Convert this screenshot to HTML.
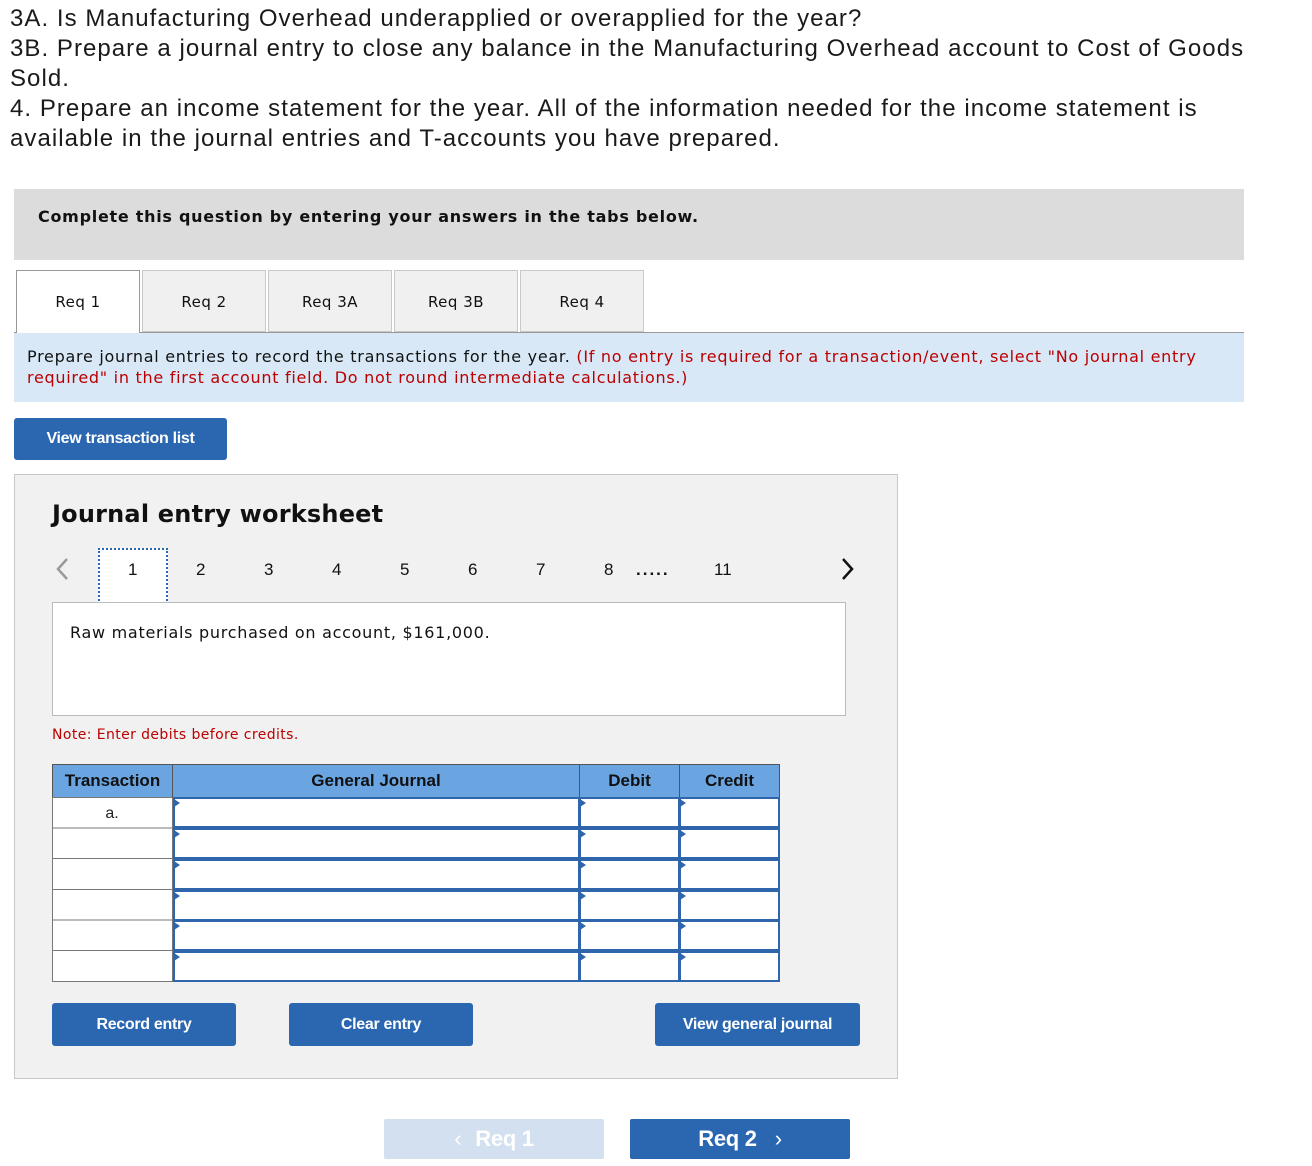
<!DOCTYPE html>
<html><head><meta charset="utf-8"><style>
*{box-sizing:border-box;margin:0;padding:0}
body{width:1312px;height:1166px;background:#fff;position:relative;overflow:hidden;font-family:"Liberation Sans",Arial,sans-serif;color:#111}
.abs{position:absolute}
.top{left:10px;top:4px;font-size:24px;line-height:30px;width:1290px;color:#1a1a1a;letter-spacing:1.05px;white-space:nowrap}
.v{font-family:"DejaVu Sans",Verdana,sans-serif;letter-spacing:0.045em}
.tab{position:absolute;top:270px;height:62px;width:124px;border:1px solid #c8c8c8;background:#f0f0f0;font-family:"DejaVu Sans",Verdana,sans-serif;font-size:15px;letter-spacing:0.5px;text-align:center;line-height:62px}
.btn{position:absolute;background:#2a67b0;color:#fff;font-weight:bold;text-align:center;border-radius:3px;font-size:16px;letter-spacing:-0.3px}
.n{position:absolute;top:560px;font-size:17px}
table{border-collapse:collapse}
</style></head><body>
<div class="abs top">3A. Is Manufacturing Overhead underapplied or overapplied for the year?<br>3B. Prepare a journal entry to close any balance in the Manufacturing Overhead account to Cost of Goods<br>Sold.<br>4. Prepare an income statement for the year. All of the information needed for the income statement is<br>available in the journal entries and T-accounts you have prepared.</div>

<div class="abs" style="left:14px;top:189px;width:1230px;height:71px;background:#dcdcdc"></div>
<div class="abs v" style="left:38px;top:207px;font-size:16px;font-weight:bold">Complete this question by entering your answers in the tabs below.</div>

<div class="abs" style="left:14px;top:332px;width:1230px;height:1px;background:#999"></div>
<div class="tab" style="left:16px;background:#fff;border-color:#999;border-bottom:none;height:63px">Req 1</div>
<div class="tab" style="left:142px">Req 2</div>
<div class="tab" style="left:268px">Req 3A</div>
<div class="tab" style="left:394px">Req 3B</div>
<div class="tab" style="left:520px">Req 4</div>

<div class="abs" style="left:14px;top:333px;width:1230px;height:69px;background:#d8e8f7"></div>
<div class="abs v" style="left:27px;top:346px;width:1215px;font-size:16px;line-height:21px;color:#111;white-space:nowrap">Prepare journal entries to record the transactions for the year. <span style="color:#b00">(If no entry is required for a transaction/event, select "No journal entry<br>required" in the first account field. Do not round intermediate calculations.)</span></div>

<div class="btn" style="left:14px;top:418px;width:213px;height:42px;line-height:42px;font-size:16px">View transaction list</div>

<div class="abs" style="left:14px;top:474px;width:884px;height:605px;background:#f1f1f1;border:1px solid #c8c8c8"></div>
<div class="abs v" style="left:52px;top:500px;font-size:24px;font-weight:bold;letter-spacing:0.2px">Journal entry worksheet</div>

<svg class="abs" style="left:54px;top:557px" width="16" height="24"><path d="M13 2 L4 12 L13 22" stroke="#999" stroke-width="2.5" fill="none"/></svg>
<svg class="abs" style="left:840px;top:557px" width="16" height="24"><path d="M3 2 L12 12 L3 22" stroke="#111" stroke-width="2.5" fill="none"/></svg>
<div class="abs" style="left:98px;top:548px;width:70px;height:57px;background:#fff;border:2px dotted #2a67b0"></div>
<div class="n" style="left:128px">1</div>
<div class="n" style="left:196px">2</div>
<div class="n" style="left:264px">3</div>
<div class="n" style="left:332px">4</div>
<div class="n" style="left:400px">5</div>
<div class="n" style="left:468px">6</div>
<div class="n" style="left:536px">7</div>
<div class="n" style="left:604px">8</div>
<div class="n" style="left:636px;font-weight:bold;letter-spacing:2px">.....</div>
<div class="n" style="left:714px">11</div>

<div class="abs" style="left:52px;top:602px;width:794px;height:114px;background:#fff;border:1px solid #bbb"></div>
<div class="abs v" style="left:70px;top:623px;font-size:16px">Raw materials purchased on account, $161,000.</div>
<div class="abs v" style="left:52px;top:727px;font-size:14px;color:#b00;letter-spacing:0.4px">Note: Enter debits before credits.</div>

<div class="abs" style="left:52px;top:764px">
<table style="width:728px">
<tr style="height:34px;background:#6aa5e2;font-weight:bold;font-size:17px">
<td style="width:120px;border:1px solid #555;border-bottom:2px solid #222;text-align:center">Transaction</td>
<td style="width:407px;border:1px solid #555;border-bottom:2px solid #222;text-align:center">General Journal</td>
<td style="width:100px;border:1px solid #555;border-bottom:2px solid #222;text-align:center">Debit</td>
<td style="width:100px;border:1px solid #555;border-bottom:2px solid #222;text-align:center">Credit</td>
</tr>
</table>
</div>
<svg class="abs" style="left:52px;top:797px" width="730" height="186">
<g>
<rect x="0.5" y="0.5" width="120" height="184" fill="#fff" stroke="#777"/>
<line x1="0" y1="31" x2="121" y2="31" stroke="#777"/>
<line x1="0" y1="61.5" x2="121" y2="61.5" stroke="#777"/>
<line x1="0" y1="92.5" x2="121" y2="92.5" stroke="#777"/>
<line x1="0" y1="123" x2="121" y2="123" stroke="#777"/>
<line x1="0" y1="153.5" x2="121" y2="153.5" stroke="#777"/>
<text x="60" y="21" font-family="Liberation Sans" font-size="16" text-anchor="middle" fill="#222">a.</text>
</g>
<g fill="#fff" stroke="#2f65aa" stroke-width="2">
<rect x="122" y="1" width="405" height="29"/><rect x="528" y="1" width="99" height="29"/><rect x="628" y="1" width="99" height="29"/>
<rect x="122" y="32" width="405" height="29"/><rect x="528" y="32" width="99" height="29"/><rect x="628" y="32" width="99" height="29"/>
<rect x="122" y="63" width="405" height="29"/><rect x="528" y="63" width="99" height="29"/><rect x="628" y="63" width="99" height="29"/>
<rect x="122" y="94" width="405" height="29"/><rect x="528" y="94" width="99" height="29"/><rect x="628" y="94" width="99" height="29"/>
<rect x="122" y="124" width="405" height="29"/><rect x="528" y="124" width="99" height="29"/><rect x="628" y="124" width="99" height="29"/>
<rect x="122" y="155" width="405" height="29"/><rect x="528" y="155" width="99" height="29"/><rect x="628" y="155" width="99" height="29"/>
</g>
<g fill="#2f65aa">
<path d="M122 2 l6 4 l-6 4z"/><path d="M528 2 l6 4 l-6 4z"/><path d="M628 2 l6 4 l-6 4z"/>
<path d="M122 33 l6 4 l-6 4z"/><path d="M528 33 l6 4 l-6 4z"/><path d="M628 33 l6 4 l-6 4z"/>
<path d="M122 64 l6 4 l-6 4z"/><path d="M528 64 l6 4 l-6 4z"/><path d="M628 64 l6 4 l-6 4z"/>
<path d="M122 95 l6 4 l-6 4z"/><path d="M528 95 l6 4 l-6 4z"/><path d="M628 95 l6 4 l-6 4z"/>
<path d="M122 125 l6 4 l-6 4z"/><path d="M528 125 l6 4 l-6 4z"/><path d="M628 125 l6 4 l-6 4z"/>
<path d="M122 156 l6 4 l-6 4z"/><path d="M528 156 l6 4 l-6 4z"/><path d="M628 156 l6 4 l-6 4z"/>
</g>
</svg>

<div class="btn" style="left:52px;top:1003px;width:184px;height:43px;line-height:43px">Record entry</div>
<div class="btn" style="left:289px;top:1003px;width:184px;height:43px;line-height:43px">Clear entry</div>
<div class="btn" style="left:655px;top:1003px;width:205px;height:43px;line-height:43px">View general journal</div>

<div class="btn" style="left:384px;top:1119px;width:220px;height:40px;line-height:40px;background:#d3e0ef;font-size:22px;border-radius:2px"><span style="font-weight:normal;margin-right:14px">‹</span>Req 1</div>
<div class="btn" style="left:630px;top:1119px;width:220px;height:40px;line-height:40px;font-size:22px;border-radius:2px">Req 2<span style="font-weight:normal;margin-left:18px">›</span></div>
</body></html>
